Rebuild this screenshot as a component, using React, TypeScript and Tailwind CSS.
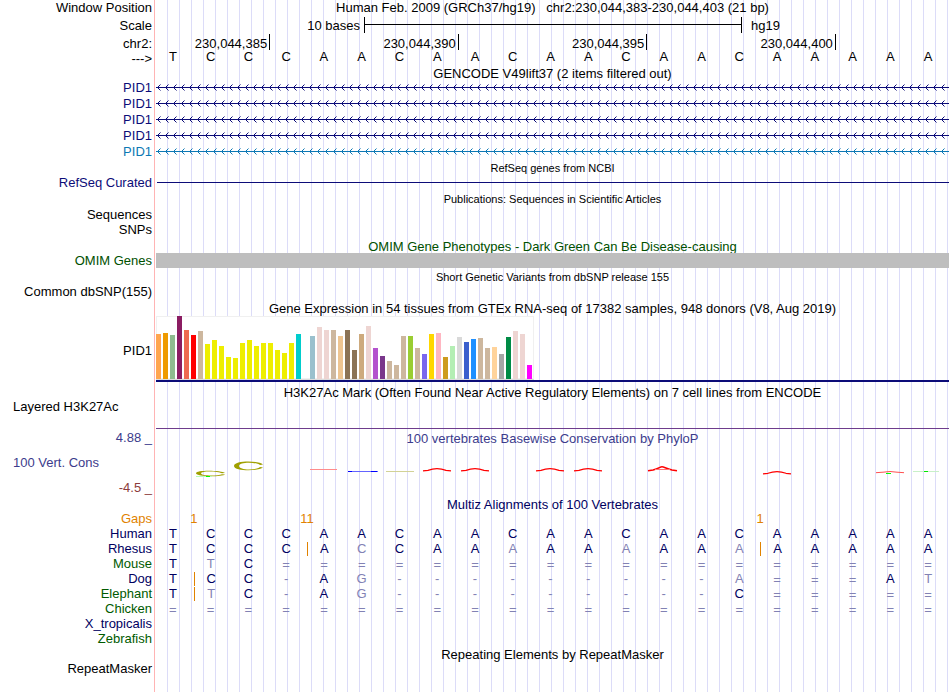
import type { ReactNode } from "react";
import clsx from "clsx";

const SEQUENCE = "TCCCAACAACAACAACAAAAA";

const SPECIES = [
  { name: "Human", color: "text-[#00005f]", bases: SEQUENCE, gaps: [] },
  { name: "Rhesus", color: "text-[#00005f]", bases: "TCCCAcCAAaAAaAAaAAAAA", gaps: [4, 16] },
  { name: "Mouse", color: "text-[#005a00]", bases: "TtC==================", gaps: [] },
  { name: "Dog", color: "text-[#00005f]", bases: "TCC-Ag---------a===At", gaps: [1] },
  { name: "Elephant", color: "text-[#005a00]", bases: "TtC-Ag---------C=====", gaps: [1] },
  { name: "Chicken", color: "text-[#005a00]", bases: "=====================", gaps: [] },
  { name: "X_tropicalis", color: "text-[#00005f]", bases: "", gaps: [] },
  { name: "Zebrafish", color: "text-[#005a00]", bases: "", gaps: [] },
];

const GAP_COUNTS: Record<number, string> = { 1: "1", 4: "11", 16: "1" };

// [height, color] for each tissue
const TISSUES: [number, string][] = [
  [45, "#ffa54f"],
  [46, "#ee9a00"],
  [44, "#8fbc8f"],
  [63, "#8b1c62"],
  [49, "#ee6a50"],
  [44, "#ff0000"],
  [48, "#cdb79e"],
  [35, "#eeee00"],
  [39, "#eeee00"],
  [33, "#eeee00"],
  [22, "#eeee00"],
  [21, "#eeee00"],
  [36, "#eeee00"],
  [39, "#eeee00"],
  [33, "#eeee00"],
  [36, "#eeee00"],
  [36, "#eeee00"],
  [29, "#eeee00"],
  [26, "#eeee00"],
  [36, "#eeee00"],
  [45, "#00cdcd"],
  [0, "#ee82ee"],
  [43, "#9ac0cd"],
  [52, "#eed5d2"],
  [49, "#eed5d2"],
  [49, "#cdb79e"],
  [43, "#eec591"],
  [49, "#8b7355"],
  [29, "#8b7355"],
  [45, "#cdaa7d"],
  [53, "#eed5d2"],
  [31, "#b452cd"],
  [23, "#7a378b"],
  [18, "#cdb79e"],
  [14, "#cdb79e"],
  [43, "#cdb79e"],
  [43, "#9acd32"],
  [31, "#cdb79e"],
  [25, "#7a67ee"],
  [45, "#ffd700"],
  [46, "#ffb6c1"],
  [22, "#cd9b1d"],
  [33, "#b4eeb4"],
  [42, "#d9d9d9"],
  [37, "#3a5fcd"],
  [40, "#1e90ff"],
  [41, "#cdb79e"],
  [31, "#cdb79e"],
  [32, "#ffd39b"],
  [25, "#a6a6a6"],
  [42, "#008b45"],
  [48, "#eed5d2"],
  [45, "#eed5d2"],
  [14, "#ff00ff"],
];

type RowProps = {
  label?: ReactNode;
  className?: string;
  labelClass?: string;
  children?: ReactNode;
};

function Row({ label, className = "h-4", labelClass = "pb-[2px]", children }: RowProps) {
  return (
    <div className={clsx("flex", className)}>
      <div
        className={clsx(
          "flex w-[155px] shrink-0 items-center justify-end border-r border-[#ffb4b4] pr-[2px]",
          labelClass,
        )}
      >
        {label}
      </div>
      <div className="mx-px min-w-0 flex-1 bg-[repeating-linear-gradient(90deg,transparent_0_11px,#dcdcf8_11px_12px)]">
        {children}
      </div>
    </div>
  );
}

function Title({ children, className }: { children: ReactNode; className?: string }) {
  return (
    <h2 className={clsx("flex h-full items-center justify-center", className)}>{children}</h2>
  );
}

function Bases({ bases, gaps = [] }: { bases: string; gaps?: number[] }) {
  return (
    <div className="grid h-[14px] grid-cols-21">
      {bases.split("").map((base, i) => {
        const matches = /[A-Z]/.test(base);
        return (
          <span
            key={i}
            className={clsx(
              "flex items-center justify-center pr-1",
              base === "=" ? "pt-px" : "pb-px",
              !matches && "text-[#8282b4]",
              gaps.includes(i) && "border-l border-[#e18200]",
            )}
          >
            {base.toUpperCase()}
          </span>
        );
      })}
    </div>
  );
}

function Tick({ children, className }: { children: ReactNode; className: string }) {
  return (
    <span className={clsx("border-r border-black pt-[3px] pr-[2px] text-right", className)}>
      {children}
    </span>
  );
}

function Gene({ id, className }: { id: string; className: string }) {
  return (
    <Row label="PID1" labelClass={clsx("pb-[2px]", className)}>
      <svg className={clsx("block h-4 w-full", className)} shapeRendering="crispEdges">
        <defs>
          <pattern id={id} width="8" height="16" patternUnits="userSpaceOnUse">
            <path
              d="M1 7h1v1h-1zM2 6h1v1h-1zM2 8h1v1h-1zM3 5h1v1h-1zM3 9h1v1h-1z"
              fill="currentColor"
            />
            <path d="M4 4h1v1h-1zM4 10h1v1h-1z" fill="currentColor" opacity="0.5" />
          </pattern>
        </defs>
        <rect width="100%" height="16" fill={`url(#${id})`} />
        <rect y="7" width="100%" height="1" fill="currentColor" />
      </svg>
    </Row>
  );
}

function Expression() {
  return (
    <div className="flex h-full flex-col">
      <div className="flex h-16 w-[378px] items-end gap-[2px] border-b border-[#dcdcdc] bg-white shadow-[inset_0_0_0_1px_#f0f0f0]">
        {TISSUES.map(([height, color], i) => (
          <div key={i} className="w-[5px] shrink-0" style={{ height, backgroundColor: color }} />
        ))}
      </div>
      <div className="h-[2px] bg-[#0c0c78]" />
    </div>
  );
}

function Conservation() {
  return (
    <svg
      className="block h-[34px] w-full"
      viewBox="0 0 793 34"
      preserveAspectRatio="none"
      fill="none"
    >
      <g fill="#a0a000">
        <path
          fillRule="evenodd"
          d="M69 27C66 24.4 40 23.6 40 27.3C40 31 66 31 69 28.4L66 28.2C62 30 45 30.2 45 27.3C45 24.6 62 25 66 27.2Z"
        />
        <path
          fillRule="evenodd"
          d="M107 18.4C103 14.6 78 14.2 78 20C78 25.6 103 25.4 107 21.6L104 21C100 24.4 83 24.4 83 20C83 15.6 100 15.8 104 19Z"
        />
      </g>
      <path d="M40 30.5h16" stroke="#b4ffb4" />
      <path d="M50 30.5h4" stroke="#00ff00" />
      <path d="M154 23.5h27" stroke="#ff8c8c" />
      <path d="M192 25.5h30" stroke="#6464ff" />
      <path d="M192 25.5h4M215 25.5h6" stroke="#0000ff" />
      <path d="M230 25.5h28" stroke="#d2d296" />
      <g stroke="#ff0000" strokeWidth="1.2">
        <path d="M267 24.8L272 24.4Q281 20.8 290 24.4L295 24.8" />
        <path d="M305 24.8L310 24.4Q319 20.8 328 24.4L333 24.8" />
        <path d="M380 24.8L385 24.4Q394 20.8 403 24.4L408 24.8" />
        <path d="M418 24.8L423 24.4Q432 20.8 441 24.4L446 24.8" />
        <path d="M607 27.8L612 27.3Q621 24 630 27.3L635 27.8" />
      </g>
      <path
        d="M492 24.8L497 24C503 22.5 504 20.7 506 20.7S510 22.5 516 24L521 24.8"
        stroke="#ff0000"
        strokeWidth="1.5"
      />
      <path d="M499 23.5h15" stroke="#ff7878" />
      <path d="M720 26.7L727 26.2Q734 24.8 741 26.2L748 26.7" stroke="#ff5050" />
      <path d="M730 27.5h5" stroke="#00ff00" />
      <path d="M757 25.5h26" stroke="#c8f0c8" />
      <path d="M768 25.5h4" stroke="#00e600" />
    </svg>
  );
}

export default function App() {
  return (
    <main className="flex min-h-screen flex-col overflow-x-hidden bg-white font-['Liberation_Sans',Arial,sans-serif] text-[13px] leading-none whitespace-pre text-black">
      <Row label="Window Position">
        <Title className="pb-[2px]">
          Human Feb. 2009 (GRCh37/hg19)   chr2:230,044,383-230,044,403 (21 bp)
        </Title>
      </Row>
      <Row label="Scale" labelClass="pt-px" className="h-[18px]">
        <div className="grid h-full grid-cols-[208fr_378fr_207fr] items-center">
          <span className="pr-1 text-right">10 bases</span>
          <div className="flex h-4 items-center border-x border-black pb-px">
            <div className="h-px w-full bg-black" />
          </div>
          <span className="pl-[9px]">hg19</span>
        </div>
      </Row>
      <Row label="chr2:" labelClass="pt-[2px]">
        <div className="grid h-[14px] grid-cols-21 pl-px">
          <Tick className="col-span-3">230,044,385</Tick>
          <Tick className="col-span-5">230,044,390</Tick>
          <Tick className="col-span-5">230,044,395</Tick>
          <Tick className="col-span-5">230,044,400</Tick>
        </div>
      </Row>
      <Row label="--->" labelClass="pt-px">
        <Bases bases={SEQUENCE} />
      </Row>
      <Row className="h-[14px]">
        <Title>GENCODE V49lift37 (2 items filtered out)</Title>
      </Row>
      <Gene id="gene-1" className="text-[#0c0c78]" />
      <Gene id="gene-2" className="text-[#0c0c78]" />
      <Gene id="gene-3" className="text-[#0c0c78]" />
      <Gene id="gene-4" className="text-[#0c0c78]" />
      <Gene id="gene-5" className="text-[#0c78b4]" />
      <Row>
        <Title className="text-[11px]">RefSeq genes from NCBI</Title>
      </Row>
      <Row label="RefSeq Curated" labelClass="text-[#0c0c78]" className="h-[13px]">
        <div className="flex h-full items-center pl-px">
          <div className="h-px w-full bg-[#0c0c78]" />
        </div>
      </Row>
      <Row className="h-[19px]">
        <Title className="pt-[2px] text-[11px]">
          Publications: Sequences in Scientific Articles
        </Title>
      </Row>
      <Row label="Sequences" className="h-[14px]" />
      <Row label="SNPs" className="h-[17px]" />
      <Row className="h-[14px]">
        <Title className="text-[#005000]">OMIM Gene Phenotypes - Dark Green Can Be Disease-causing</Title>
      </Row>
      <Row label="OMIM Genes" labelClass="text-[#005000]" className="h-[15px]">
        <div className="h-full bg-[#bebebe]" />
      </Row>
      <Row className="h-[17px]">
        <Title className="pt-[2px] text-[11px]">
          Short Genetic Variants from dbSNP release 155
        </Title>
      </Row>
      <Row label="Common dbSNP(155)" className="h-[15px]" />
      <Row>
        <Title>Gene Expression in 54 tissues from GTEx RNA-seq of 17382 samples, 948 donors (V8, Aug 2019)</Title>
      </Row>
      <Row label="PID1" labelClass="pt-px" className="h-[68px]">
        <Expression />
      </Row>
      <Row>
        <Title>H3K27Ac Mark (Often Found Near Active Regulatory Elements) on 7 cell lines from ENCODE</Title>
      </Row>
      <Row
        label={<span className="flex-1 self-start pl-[13px]">Layered H3K27Ac</span>}
        className="h-[30px]"
      >
        <div className="flex h-full flex-col justify-end pb-px">
          <div className="h-px bg-[#6e3c8c]" />
        </div>
      </Row>
      <Row label="4.88 _" labelClass="pb-[2px] text-[#3c3c8c]">
        <Title className="text-[#3c3c8c]">100 vertebrates Basewise Conservation by PhyloP</Title>
      </Row>
      <Row
        label={<span className="flex-1 pl-[13px]">100 Vert. Cons</span>}
        labelClass="pb-[2px] text-[#3c3c8c]"
        className="h-[34px]"
      >
        <Conservation />
      </Row>
      <Row label="-4.5 _" labelClass="pb-[2px] text-[#8c3c3c]" />
      <Row>
        <Title className="text-[#00005f]">Multiz Alignments of 100 Vertebrates</Title>
      </Row>
      <Row label="Gaps" labelClass="pb-[2px] text-[#e18200]" className="h-[15px]">
        <div className="grid h-full grid-cols-21 items-center pb-[2px] text-[#e18200]">
          {SEQUENCE.split("").map((_, i) => (
            <span key={i} className="flex w-0 justify-center">
              {GAP_COUNTS[i]}
            </span>
          ))}
        </div>
      </Row>
      {SPECIES.map(({ name, color, bases, gaps }) => (
        <Row key={name} label={name} labelClass={clsx("pb-[2px]", color)} className="h-[15px]">
          <div className="text-[#00005f]">
            <Bases bases={bases} gaps={gaps} />
          </div>
        </Row>
      ))}
      <Row className="h-[15px]">
        <Title>Repeating Elements by RepeatMasker</Title>
      </Row>
      <Row label="RepeatMasker" className="h-[14px]" />
      <Row className="flex-1" />
    </main>
  );
}
